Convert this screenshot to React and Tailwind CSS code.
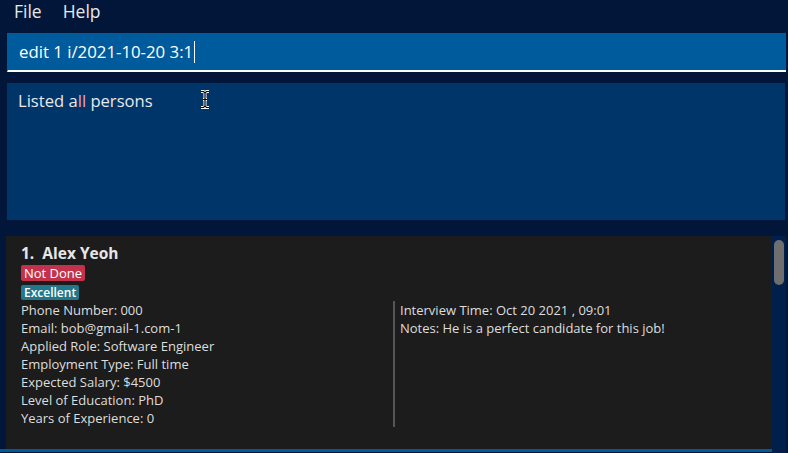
const details = [
    "Phone Number: 000",
    "Email: bob@gmail-1.com-1",
    "Applied Role: Software Engineer",
    "Employment Type: Full time",
    "Expected Salary: $4500",
    "Level of Education: PhD",
    "Years of Experience: 0",
];

const extra = [
    "Interview Time: Oct 20 2021 , 09:01",
    "Notes: He is a perfect candidate for this job!",
];

const TextCursor = () => (
    <svg
        className="absolute left-[199px] top-[90px]"
        width="12"
        height="19"
        viewBox="0 0 12 19"
    >
        <path
            d="M2 1.5h2.5L6 3l1.5-1.5H10M6 3v13M2 17.5h2.5L6 16l1.5 1.5H10M4 9.5h4"
            fill="none"
            stroke="#fff"
            strokeWidth="3"
        />
        <path
            d="M2 1.5h2.5L6 3l1.5-1.5H10M6 3v13M2 17.5h2.5L6 16l1.5 1.5H10M4 9.5h4"
            fill="none"
            stroke="#000"
            strokeWidth="1.2"
        />
    </svg>
);

export default function App() {
    return (
        <div
            className="relative w-[788px] h-[453px] overflow-hidden bg-[#011638] text-white"
            style={{ fontFamily: '"Open Sans", "Noto Sans", sans-serif' }}
        >
            {/* menu bar */}
            <div className="flex items-center gap-[21px] h-[23px] px-[14px] text-[17.5px] leading-[23px] text-[#e8e8e8]">
                <span>File</span>
                <span>Help</span>
            </div>

            {/* command box */}
            <div className="ml-[7px] mt-[10px] mr-[2px] h-[39px] bg-[#005b9c] border-t border-l border-[#2f4d6b] border-b-2 border-b-white flex items-center px-[11px] text-[16.8px]">
                <span>edit 1 i/2021-10-20 3:1</span>
                <span className="inline-block w-px h-[22px] bg-white ml-[1px]"></span>
            </div>

            {/* result box */}
            <div className="ml-[7px] mr-[3px] mt-[11px] h-[137px] bg-[#00356a] px-[11px] pt-[7px] text-[16.6px] leading-[22px] text-[#e8e8e8]">
                Listed a<span className="text-[#f0a0b8]">ll</span> persons
            </div>

            {/* person list */}
            <div className="flex mt-[16px] h-[220px]">
                <div className="w-[772px] flex flex-col">
                    <div className="ml-[6px] bg-[#1c1c1c] px-[15px] pt-[7px] h-[213px] text-[13px] leading-[18px] text-[#dedede]">
                        <div className="text-[15.5px] leading-[20px] font-bold text-[#e6e6e6]">
                            1.&nbsp;&nbsp;Alex Yeoh
                        </div>
                        <div className="mt-[2px] flex flex-col items-start gap-[4px]">
                            <span className="bg-[#c2334b] text-white text-[13px] leading-[16px] px-[3px] rounded-[2px]">
                                Not Done
                            </span>
                            <span className="bg-[#23778a] text-white text-[12px] leading-[15px] px-[3px] rounded-[2px] font-semibold">
                                Excellent
                            </span>
                        </div>
                        <div className="flex mt-[1px]">
                            <div className="w-[372px]">
                                {details.map((line) => (
                                    <div key={line}>{line}</div>
                                ))}
                            </div>
                            <div className="border-l-[2px] border-[#555555] pl-[5px] h-[126px]">
                                {extra.map((line) => (
                                    <div key={line}>{line}</div>
                                ))}
                            </div>
                        </div>
                    </div>
                    <div className="h-[3px] bg-[#015a9a]"></div>
                </div>
                <div className="w-[14px] bg-[#00204b] pt-[4px] flex justify-center">
                    <div className="w-[10px] h-[45px] rounded-[5px] bg-[#6e6e6e]"></div>
                </div>
            </div>

            <TextCursor />
        </div>
    );
}
